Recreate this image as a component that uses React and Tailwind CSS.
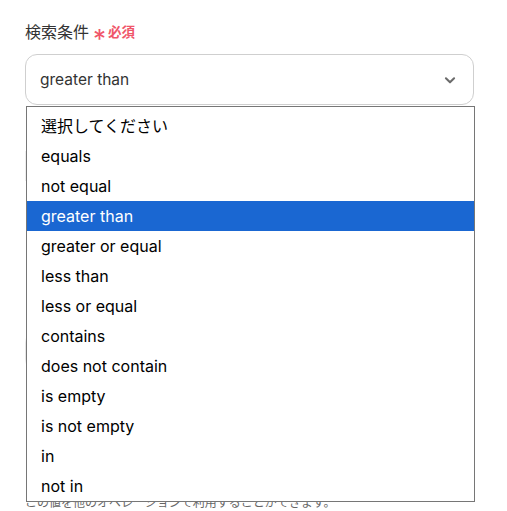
import React, { useState } from "react";

const options = [
  "選択してください",
  "equals",
  "not equal",
  "greater than",
  "greater or equal",
  "less than",
  "less or equal",
  "contains",
  "does not contain",
  "is empty",
  "is not empty",
  "in",
  "not in",
];

const font = { fontFamily: 'Inter, "Noto Sans CJK JP", sans-serif' };

export default function App() {
  const [selected] = useState("greater than");

  return (
    <div className="relative w-[507px] h-[511px] bg-white overflow-hidden" style={font}>
      <div className="px-[25px] pt-[21px]">
        <div className="flex items-center h-[22px]">
          <span className="text-[16px] text-[#333]">検索条件</span>
          <span className="ml-[4px] text-[26px] text-[#f0566a] leading-none relative top-[7px]">*</span>
          <span className="ml-[2px] text-[13.5px] font-bold text-[#f0566a]">必須</span>
        </div>

        <div className="mt-[11px] h-[51px] w-[449px] rounded-[12px] border border-[#cfcfcf] flex items-center justify-between pl-[14px] pr-[16px]">
          <span className="text-[15.5px] text-[#333]">{selected}</span>
          <svg width="14" height="14" viewBox="0 0 24 24" fill="none" stroke="#6b6b6b" strokeWidth="3.5" strokeLinecap="round" strokeLinejoin="round">
            <path d="M5 9l7 7 7-7" />
          </svg>
        </div>

        <div className="mt-[46px] h-[30px] w-[449px] border-l border-[#eee]" />
        <div className="mt-[150px] h-[40px] w-[449px] rounded-[12px] border border-[#e6e6e6]" />
        <p className="mt-[124px] text-[12px] leading-[16px] text-[#666]">この値を他のオペレーションで利用することができます。</p>
      </div>

      <ul className="absolute left-[26px] top-[106px] w-[449px] h-[396px] border border-[#767676] bg-white pt-[4px]">
        {options.map((o) => (
          <li
            key={o}
            className={`h-[30px] flex items-center pl-[14px] text-[16px] ${
              o === selected ? "bg-[#1a67d2] text-white" : "text-black"
            }`}
          >
            {o}
          </li>
        ))}
      </ul>
    </div>
  );
}
